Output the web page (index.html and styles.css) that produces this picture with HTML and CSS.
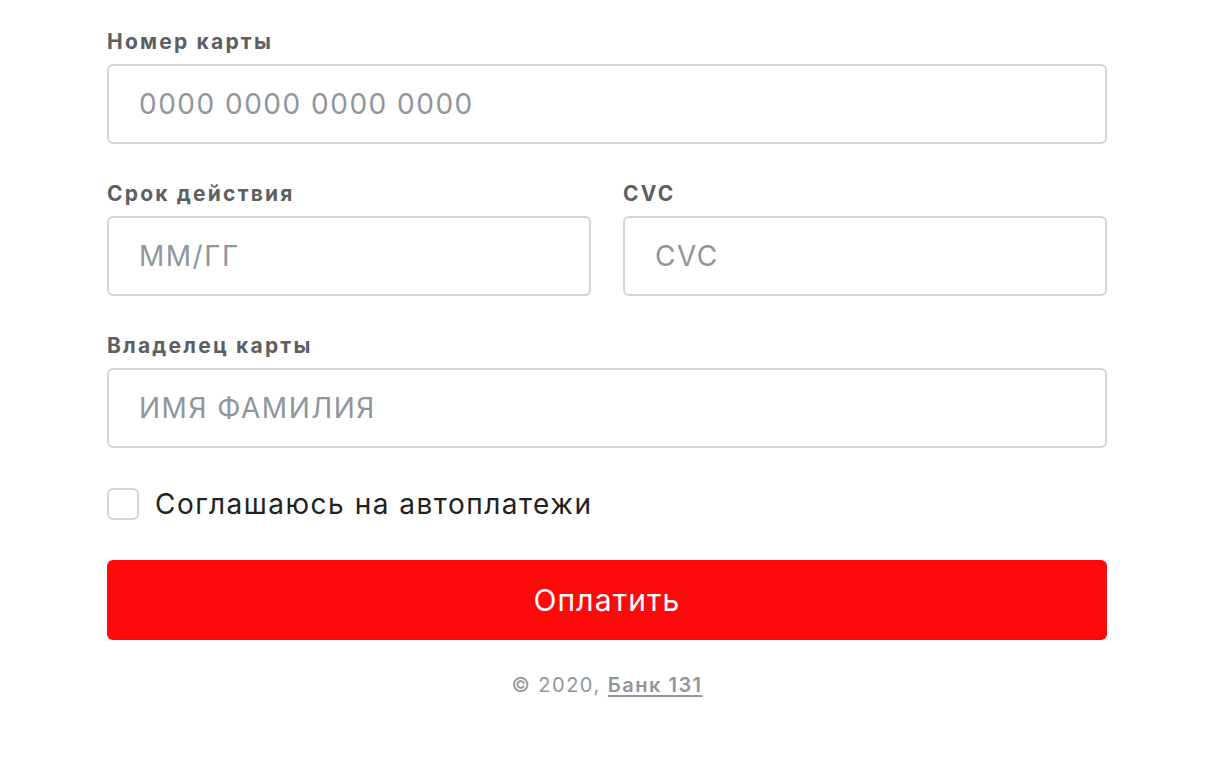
FILE: index.html
```html
<!DOCTYPE html>
<html lang="ru">
<head>
  <meta charset="UTF-8">
  <title>Оплата картой</title>
  <meta name="viewport" content="width=device-width, initial-scale=1.0">
  <link rel="stylesheet" href="styles.css">
</head>
<body>
  <form class="pay-form">
    <div class="field">
      <label for="card">Номер карты</label>
      <input type="text" id="card" placeholder="0000 0000 0000 0000">
    </div>

    <div class="row">
      <div class="field">
        <label for="exp">Срок действия</label>
        <input type="text" id="exp" placeholder="ММ/ГГ">
      </div>
      <div class="field">
        <label for="cvc">CVC</label>
        <input type="text" id="cvc" placeholder="CVC">
      </div>
    </div>

    <div class="field">
      <label for="holder">Владелец карты</label>
      <input type="text" id="holder" placeholder="ИМЯ ФАМИЛИЯ">
    </div>

    <label class="agree">
      <input type="checkbox">
      <span class="box"></span>
      Соглашаюсь на автоплатежи
    </label>

    <button type="button" class="btn-pay">Оплатить</button>

    <p class="footer">© 2020, <a href="#">Банк 131</a></p>
  </form>
</body>
</html>
```

FILE: styles.css
```css
body { margin: 0; background: #fff; font-family: Inter, "Noto Sans", sans-serif; }
.pay-form { width: 1000px; padding: 30px 0 0 107px; }
.field { display: flex; flex-direction: column; margin-bottom: 38px; }
.field label { font-size: 21px; line-height: 24px; font-weight: 700; letter-spacing: 2.2px; color: #5e5f63; margin-bottom: 10px; }
.field input {
  box-sizing: border-box; height: 80px; width: 100%;
  border: 2px solid #d3d4d6; border-radius: 6px;
  padding: 0 30px; font-family: inherit; font-size: 28px; letter-spacing: 1.5px; color: #222;
  outline: none;
}
.field input::placeholder { color: #8f969c; }
.row { display: grid; grid-template-columns: 1fr 1fr; gap: 32px; }
.agree {
  display: flex; align-items: center; gap: 16px; margin-top: 40px;
  font-size: 28px; line-height: 32px; letter-spacing: 1.5px; color: #222; cursor: pointer;
}
.agree input { display: none; }
.agree .box {
  width: 32px; height: 32px; box-sizing: border-box;
  border: 2px solid #d3d4d6; border-radius: 6px;
}
.btn-pay {
  display: block; width: 100%; height: 80px; margin-top: 40px;
  border: none; border-radius: 6px; background: #ff0a0a; color: #fff;
  font-family: inherit; font-size: 30px; letter-spacing: 1.1px; cursor: pointer;
}
.footer { margin: 33px 0 0; text-align: center; font-size: 20px; line-height: 24px; letter-spacing: 1.5px; color: #8f969c; }
.footer a { color: #8f969c; font-weight: 600; text-decoration: underline; text-underline-offset: 3px; }
```
